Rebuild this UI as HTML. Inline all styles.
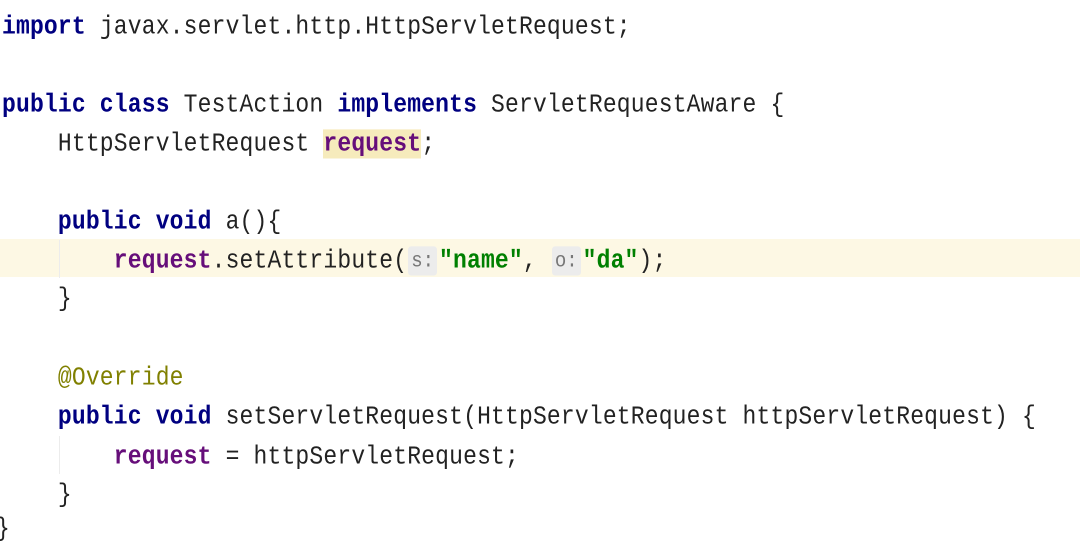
<!DOCTYPE html>
<html><head><meta charset="utf-8"><style>
html,body{margin:0;padding:0;background:#fff;width:1080px;height:547px;overflow:hidden;position:relative}
.l{position:absolute;left:2px;height:39px;line-height:39px;white-space:pre;font-family:"Liberation Mono","DejaVu Sans Mono",monospace;font-size:23px;letter-spacing:0.17px;color:#222;transform:scaleY(1.12);transform-origin:0 50%;margin-top:2px}
.k{color:#000080;font-weight:bold}
.f{color:#660e7a;font-weight:bold}
.s{color:#008000;font-weight:bold}
.a{color:#808000}
.h{position:absolute;left:0;top:239px;width:1080px;height:38px;background:#fdf8e4}
.hl{background:#f6ebbc}
.hint{display:inline-block;background:#ececec;color:#777;font-size:19px;line-height:26px;padding:0 3px;border-radius:3px;vertical-align:1px;margin:0 2px 0 1px;letter-spacing:0}
.g{position:absolute;left:59px;width:1px;background:#ececec}
</style></head><body>
<div class="h"></div>
<div class="g" style="top:240px;height:38px"></div>
<div class="g" style="top:436px;height:38px"></div>
<div class="l" style="top:6px"><span class="k">import</span> javax.servlet.http.HttpServletRequest;</div>
<div class="l" style="top:84px"><span class="k">public class</span> TestAction <span class="k">implements</span> ServletRequestAware {</div>
<div class="l" style="top:123px">    HttpServletRequest <span class="f hl">request</span>;</div>
<div class="l" style="top:201px">    <span class="k">public void</span> a(){</div>
<div class="l" style="top:240px">        <span class="f">request</span>.setAttribute(<span class="hint">s:</span><span class="s">"name"</span>, <span class="hint">o:</span><span class="s">"da"</span>);</div>
<div class="l" style="top:278px">    }</div>
<div class="l" style="top:357px">    <span class="a">@Override</span></div>
<div class="l" style="top:396px">    <span class="k">public void</span> setServletRequest(HttpServletRequest httpServletRequest) {</div>
<div class="l" style="top:436px">        <span class="f">request</span> = httpServletRequest;</div>
<div class="l" style="top:474px">    }</div>
<div class="l" style="top:508px;left:-4px">}</div>
</body></html>
